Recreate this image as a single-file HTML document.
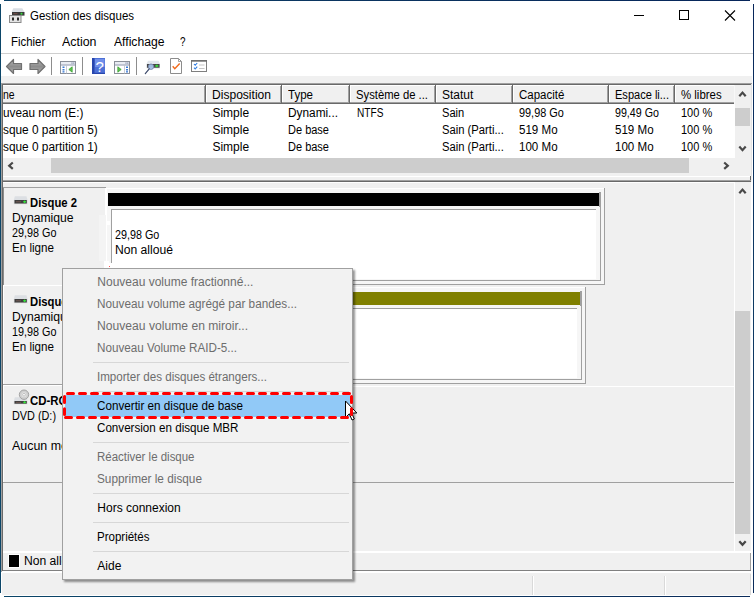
<!DOCTYPE html>
<html lang="fr"><head><meta charset="utf-8"><title>Gestion des disques</title>
<style>
html,body{margin:0;padding:0}
body{width:754px;height:597px;overflow:hidden;background:#fff;position:relative;font:12px/14px "Liberation Sans",sans-serif;color:#000}
.a,.t,svg{position:absolute}
.t{white-space:nowrap;transform-origin:0 50%;line-height:14px;font-size:12px}
.g{background:#f0f0f0}.w{background:#fff}.d{background:#696969}.m{background:#a0a0a0}.n{background:#0b2d5b}
.sep{background:#d7d7d7;height:1px;left:93px;width:256px}
</style></head><body>
<!-- gray client -->
<div class="a g" style="left:1px;top:76px;width:752px;height:520px"></div>
<!-- window frame -->
<div class="a w" style="left:752px;top:76px;width:1px;height:520px"></div>
<div class="a w" style="left:751px;top:182px;width:1px;height:414px"></div>
<div class="a w" style="left:1px;top:595px;width:752px;height:1px"></div>
<div class="a w" style="left:1px;top:573px;width:1px;height:23px"></div>
<div class="a" style="left:4px;top:0;width:746px;height:1px;background:linear-gradient(90deg,#0d4166,#07265a)"></div>
<div class="a" style="left:4px;top:596px;width:746px;height:1px;background:linear-gradient(90deg,#0a4568,#0b2b5a)"></div>
<div class="a" style="left:0;top:4px;width:1px;height:589px;background:#0c4669"></div>
<div class="a" style="left:753px;top:4px;width:1px;height:589px;background:linear-gradient(180deg,#07265a,#0d3a63 50%,#0b2b5a)"></div>
<!-- title icon -->
<svg style="left:9px;top:7px" width="17" height="17" viewBox="0 0 17 17">
<path d="M4.300 1.300h9l2.200 4h-13z" fill="#d9dee4"/>
<rect x="3" y="5" width="12.5" height="3.6" fill="#3a3a3a"/>
<rect x="4.5" y="6" width="4" height="1.2" fill="#6b4a45"/>
<rect x="11.6" y="5.8" width="1.8" height="1.8" fill="#35e03a"/>
<rect x=".5" y="8.5" width="11.5" height="7" fill="#e4e4e4" stroke="#8a8a8a" stroke-width="1"/>
<rect x="3" y="10.5" width="2" height="3" fill="#2a2a2a"/><rect x="8" y="10.5" width="2" height="3" fill="#2a2a2a"/>
</svg>
<!-- window controls -->
<svg style="left:630px;top:6px" width="110" height="20" viewBox="0 0 110 20" fill="none" stroke="#000" stroke-width="1">
<path d="M4 9.5h10"/><rect x="49.5" y="4.5" width="9" height="9"/><path d="M95 4.5l10 10M105 4.5l-10 10" stroke-width="1.1"/>
</svg>
<div class="a" style="left:1px;top:53px;width:752px;height:1px;background:#cfcfcf"></div>

<!-- toolbar -->
<svg style="left:0;top:54px" width="220" height="24" viewBox="0 0 220 24">
<defs><linearGradient id="ag" x1="0" y1="0" x2="0" y2="1"><stop offset="0" stop-color="#b4b4b4"/><stop offset=".5" stop-color="#8d8d8d"/><stop offset="1" stop-color="#b0b0b0"/></linearGradient></defs>
<!-- back / forward arrows -->
<path d="M6.500 12.500l7-7v4h8v6h-8v4z" fill="url(#ag)" stroke="#707070" stroke-width="1.200" stroke-linejoin="round"/>
<path d="M45 12.500l-7-7v4h-8v6h8v4z" fill="url(#ag)" stroke="#707070" stroke-width="1.200" stroke-linejoin="round"/>
<rect x="51" y="3" width="1" height="18" fill="#8d8d8d"/>
<!-- show/hide tree -->
<rect x="60.500" y="7.500" width="15" height="12" fill="#fff" stroke="#8a8f99"/>
<rect x="61" y="8" width="14" height="2.500" fill="#e9ecf3"/><rect x="71.500" y="8.500" width="1" height="1.200" fill="#6d7a99"/><rect x="73.300" y="8.500" width="1" height="1.200" fill="#6d7a99"/>
<rect x="61" y="10.500" width="14" height="1" fill="#8a93ab"/>
<rect x="62.500" y="12.500" width="2" height="1.500" fill="#3a7bd5"/><rect x="62.500" y="15" width="2" height="1.500" fill="#3a7bd5"/><rect x="62.500" y="17.200" width="2" height="1.300" fill="#3a7bd5"/>
<rect x="66" y="11.500" width=".8" height="8" fill="#b9bfcc"/>
<path d="M68.800 15.500l3.400-2.700v5.400z" fill="#5fc24f" stroke="#2f9a2a" stroke-width=".7"/>
<rect x="82" y="3" width="1" height="18" fill="#8d8d8d"/>
<!-- help -->
<rect x="92" y="4" width="13" height="16" fill="#4d70d6"/>
<rect x="92" y="4" width="2.500" height="16" fill="#2846ad"/><rect x="92" y="18.800" width="13" height="1.200" fill="#2846ad"/>
<rect x="95" y="5" width="9.500" height="8" fill="#7c9af0" opacity=".75"/>
<text x="95.500" y="17.500" font-family="Liberation Sans, sans-serif" font-size="15" fill="#fff">?</text>
<!-- action pane -->
<rect x="114.500" y="7.500" width="15" height="12" fill="#fff" stroke="#8a8f99"/>
<rect x="115" y="8" width="14" height="2.500" fill="#e9ecf3"/><rect x="125.500" y="8.500" width="1" height="1.200" fill="#6d7a99"/><rect x="127.300" y="8.500" width="1" height="1.200" fill="#6d7a99"/>
<rect x="115" y="10.500" width="14" height="1" fill="#8a93ab"/>
<rect x="124" y="11.500" width=".8" height="8" fill="#b9bfcc"/>
<rect x="126" y="12.500" width="2" height="1.500" fill="#3a7bd5"/><rect x="126" y="15" width="2" height="1.500" fill="#3a7bd5"/><rect x="126" y="17.200" width="2" height="1.300" fill="#3a7bd5"/>
<path d="M121.200 15.500l-3.400-2.700v5.400z" fill="#5fc24f" stroke="#2f9a2a" stroke-width=".7"/>
<rect x="136" y="3" width="1" height="18" fill="#8d8d8d"/>
<!-- rescan disk -->
<path d="M148 6.800h10.500l1.500 3.200h-13.500z" fill="#e1e6ec"/>
<rect x="146.500" y="10" width="13.500" height="4.300" fill="#cfd3d8"/><rect x="147" y="10" width="12.500" height="3.700" fill="#454545"/>
<rect x="155.300" y="11.200" width="3" height="1.400" fill="#38e03d"/><rect x="156.300" y="10.600" width="1" height="2.600" fill="#38e03d"/>
<circle cx="151" cy="12.700" r="2.700" fill="#a9c8ee" fill-opacity=".9" stroke="#7686ab" stroke-width=".9"/>
<path d="M149.200 14.900l-3.900 4.700" stroke="#3d4a6b" stroke-width="1.200" stroke-linecap="round"/>
<!-- doc w/ check -->
<path d="M170.500 4.500h8l3 3v12h-11z" fill="#fff" stroke="#8c8c8c"/>
<path d="M178.500 4.500v3h3" fill="none" stroke="#8c8c8c" stroke-width=".8"/>
<path d="M172.700 12.300l2.100 2.500 4.900-5.300" fill="none" stroke="#f26a1b" stroke-width="1.400"/>
<!-- checklist -->
<rect x="191.500" y="6.500" width="15" height="11" fill="#fff" stroke="#7f7f7f"/>
<rect x="191" y="6" width="16" height="1.700" fill="#707070"/>
<path d="M194 10l1.200 1.300 2-2.300M194 13.700l1.200 1.300 2-2.300" fill="none" stroke="#2d7be0" stroke-width="1.100"/>
<rect x="199" y="10.500" width="5.500" height="1" fill="#c5c5c5"/><rect x="199" y="14" width="5.500" height="1" fill="#c5c5c5"/>
</svg>

<!-- list view -->
<div class="a m" style="left:1px;top:83px;width:1px;height:489px;z-index:3"></div>
<div class="a d" style="left:2px;top:84px;width:1px;height:487px;z-index:3"></div>
<div class="a m" style="left:1px;top:83px;width:751px;height:1px"></div>
<div class="a d" style="left:2px;top:84px;width:749px;height:1px"></div>
<div class="a w" style="left:3px;top:176px;width:748px;height:1px"></div>
<div class="a w" style="left:752px;top:83px;width:1px;height:490px"></div>
<div class="a " style="left:751px;top:84px;width:1px;height:92px;background:#e3e3e3"></div>
<div class="a w" style="left:3px;top:104px;width:732px;height:54px"></div>
<div class="a w" style="left:3px;top:85px;width:731px;height:1px"></div>
<div class="a m" style="left:3px;top:102px;width:731px;height:1px"></div>
<div class="a d" style="left:3px;top:103px;width:731px;height:1px"></div>
<div class="a m" style="left:204px;top:86px;width:1px;height:17px"></div>
<div class="a d" style="left:205px;top:85px;width:1px;height:19px"></div>
<div class="a w" style="left:206px;top:85px;width:1px;height:17px"></div>
<div class="a m" style="left:280px;top:86px;width:1px;height:17px"></div>
<div class="a d" style="left:281px;top:85px;width:1px;height:19px"></div>
<div class="a w" style="left:282px;top:85px;width:1px;height:17px"></div>
<div class="a m" style="left:348px;top:86px;width:1px;height:17px"></div>
<div class="a d" style="left:349px;top:85px;width:1px;height:19px"></div>
<div class="a w" style="left:350px;top:85px;width:1px;height:17px"></div>
<div class="a m" style="left:434px;top:86px;width:1px;height:17px"></div>
<div class="a d" style="left:435px;top:85px;width:1px;height:19px"></div>
<div class="a w" style="left:436px;top:85px;width:1px;height:17px"></div>
<div class="a m" style="left:511px;top:86px;width:1px;height:17px"></div>
<div class="a d" style="left:512px;top:85px;width:1px;height:19px"></div>
<div class="a w" style="left:513px;top:85px;width:1px;height:17px"></div>
<div class="a m" style="left:607px;top:86px;width:1px;height:17px"></div>
<div class="a d" style="left:608px;top:85px;width:1px;height:19px"></div>
<div class="a w" style="left:609px;top:85px;width:1px;height:17px"></div>
<div class="a m" style="left:673px;top:86px;width:1px;height:17px"></div>
<div class="a d" style="left:674px;top:85px;width:1px;height:19px"></div>
<div class="a w" style="left:675px;top:85px;width:1px;height:17px"></div>
<div class="a " style="left:734px;top:85px;width:1px;height:19px;background:#f8f8f8"></div>
<div class="a " style="left:735px;top:108px;width:15px;height:18px;background:#cdcdcd"></div>
<div class="a " style="left:51px;top:158px;width:638px;height:15px;background:#cdcdcd"></div>
<svg style="left:0;top:85px" width="754" height="92" viewBox="0 0 754 92" fill="none" stroke="#484848" stroke-width="2.200">
<path d="M739.300 11.200l3.200-3.600 3.200 3.600"/><path d="M739.300 61.600l3.200 3.600 3.200-3.600"/>
<path d="M12.800 77.500l-3.600 3.200 3.600 3.200"/><path d="M724.200 77.500l3.600 3.200-3.600 3.200"/>
</svg>

<!-- lower pane -->
<div class="a d" style="left:750px;top:176px;width:1px;height:6px"></div>
<div class="a m" style="left:3px;top:180px;width:748px;height:1px"></div>
<div class="a d" style="left:3px;top:181px;width:747px;height:1px"></div>
<div class="a w" style="left:3px;top:182px;width:731px;height:1px"></div>
<div class="a w" style="left:734px;top:182px;width:1px;height:370px"></div>
<div class="a " style="left:735px;top:311px;width:15px;height:223px;background:#cdcdcd"></div>
<div class="a m" style="left:3px;top:187px;width:103px;height:1px"></div>
<div class="a " style="left:3px;top:188px;width:1px;height:97px;background:#8c8c8c"></div>
<div class="a w" style="left:3px;top:285px;width:103px;height:1px"></div>
<div class="a w" style="left:3px;top:286px;width:1px;height:98px"></div>
<div class="a m" style="left:3px;top:384px;width:103px;height:1px"></div>
<div class="a w" style="left:3px;top:385px;width:103px;height:1px"></div>
<div class="a w" style="left:106px;top:386px;width:628px;height:1px"></div>
<div class="a w" style="left:3px;top:386px;width:1px;height:97px"></div>
<div class="a m" style="left:3px;top:482px;width:731px;height:1px"></div>
<div class="a " style="left:105px;top:188px;width:499px;height:97px;background:#f6f6f6"></div>
<div class="a w" style="left:105px;top:188px;width:499px;height:1px"></div>
<div class="a w" style="left:105px;top:188px;width:2px;height:97px"></div>
<div class="a m" style="left:604px;top:188px;width:1px;height:97px"></div>
<div class="a m" style="left:106px;top:284px;width:499px;height:1px"></div>
<div class="a " style="left:108px;top:193px;width:491px;height:13px;background:#000"></div>
<div class="a m" style="left:599px;top:192px;width:1px;height:15px"></div>
<div class="a m" style="left:600px;top:192px;width:1px;height:89px"></div>
<div class="a m" style="left:108px;top:280px;width:493px;height:1px"></div>
<div class="a m" style="left:111px;top:209px;width:485px;height:70px"></div>
<div class="a w" style="left:112px;top:210px;width:484px;height:69px"></div>
<div class="a w" style="left:106px;top:221px;width:4px;height:4px"></div>
<div class="a w" style="left:104px;top:261px;width:5px;height:2px"></div>
<div class="a w" style="left:104px;top:263px;width:10px;height:5px"></div>
<div class="a " style="left:109px;top:266px;width:1px;height:1px;background:#f55"></div>
<div class="a " style="left:99px;top:215px;width:7px;height:46px;background:#f4f4f4"></div>
<div class="a " style="left:105px;top:287px;width:480px;height:97px;background:#f6f6f6"></div>
<div class="a w" style="left:105px;top:287px;width:480px;height:1px"></div>
<div class="a w" style="left:105px;top:287px;width:2px;height:97px"></div>
<div class="a m" style="left:585px;top:287px;width:1px;height:97px"></div>
<div class="a m" style="left:106px;top:383px;width:480px;height:1px"></div>
<div class="a " style="left:108px;top:292px;width:472px;height:13px;background:#808000"></div>
<div class="a m" style="left:580px;top:291px;width:1px;height:15px"></div>
<div class="a m" style="left:581px;top:291px;width:1px;height:89px"></div>
<div class="a m" style="left:108px;top:379px;width:474px;height:1px"></div>
<div class="a m" style="left:111px;top:308px;width:466px;height:70px"></div>
<div class="a w" style="left:112px;top:309px;width:465px;height:69px"></div>
<svg style="left:734px;top:182px" width="18" height="370" viewBox="0 0 18 370" fill="none" stroke="#484848" stroke-width="2.200">
<path d="M5.300 11.200l3.200-3.600 3.200 3.600"/><path d="M5.300 359.200l3.200 3.600 3.200-3.600"/>
</svg>
<svg style="left:13px;top:195px" width="16" height="11" viewBox="0 0 16 11"><path d="M1.800 1.200h11.700l1 3.800h-13.700z" fill="#dcdfe3"/><rect x=".8" y="5" width="13.700" height="4.200" fill="#d6d6d6"/><rect x="1.500" y="5" width="12.300" height="3.500" fill="#3f3f3f"/><rect x="3" y="6.200" width="5" height="1.100" fill="#6d5652"/><rect x="10.300" y="6" width="2.600" height="1.500" fill="#35e23a"/><rect x="11.100" y="5.500" width="1" height="2.500" fill="#35e23a"/></svg>
<svg style="left:13px;top:294px" width="16" height="11" viewBox="0 0 16 11"><path d="M1.800 1.200h11.700l1 3.800h-13.700z" fill="#dcdfe3"/><rect x=".8" y="5" width="13.700" height="4.200" fill="#d6d6d6"/><rect x="1.500" y="5" width="12.300" height="3.500" fill="#3f3f3f"/><rect x="3" y="6.200" width="5" height="1.100" fill="#6d5652"/><rect x="10.300" y="6" width="2.600" height="1.500" fill="#35e23a"/><rect x="11.100" y="5.500" width="1" height="2.500" fill="#35e23a"/></svg>
<svg style="left:13px;top:389px" width="17" height="16" viewBox="0 0 17 16"><path d="M1.800 8.200h11.700l1 3.800h-13.700z" fill="#dcdfe3"/><rect x=".8" y="12" width="13.700" height="3.200" fill="#d6d6d6"/><rect x="1.500" y="12" width="12.300" height="2.700" fill="#3f3f3f"/><rect x="3" y="12.900" width="5" height="1" fill="#6d5652"/><rect x="10.300" y="12.700" width="2.600" height="1.300" fill="#35e23a"/><rect x="11.100" y="12.200" width="1" height="2.300" fill="#35e23a"/><circle cx="11" cy="5.700" r="4.700" fill="#cfcfcf" stroke="#a3a3a3" stroke-width="1"/><circle cx="11" cy="5.700" r="2.500" fill="#e2e2e2"/><circle cx="11" cy="5.700" r="1.300" fill="#fff" stroke="#9a9a9a" stroke-width=".5"/></svg>

<!-- legend + status -->
<div class="a w" style="left:3px;top:551px;width:748px;height:2px"></div>
<div class="a w" style="left:8px;top:554px;width:12px;height:14px"></div>
<div class="a " style="left:9px;top:555px;width:10px;height:12px;background:#000"></div>
<div class="a m" style="left:750px;top:553px;width:1px;height:18px"></div>
<div class="a " style="left:3px;top:570px;width:748px;height:1px;background:#808080"></div>
<div class="a w" style="left:1px;top:571px;width:751px;height:2px"></div>
<div class="a " style="left:532px;top:576px;width:1px;height:19px;background:#d9d9d9"></div>
<div class="a w" style="left:533px;top:576px;width:1px;height:19px"></div>
<div class="a " style="left:664px;top:576px;width:1px;height:19px;background:#d9d9d9"></div>
<div class="a w" style="left:665px;top:576px;width:1px;height:19px"></div>
<div class="a " style="left:750px;top:574px;width:1px;height:21px;background:#d9d9d9"></div>

<div id="maintext">
<span class="t" style="left:30.0px;top:9px;transform:scaleX(0.9565);">Gestion des disques</span>
<span class="t" style="left:11.4px;top:35px;transform:scaleX(0.9496);">Fichier</span>
<span class="t" style="left:62.3px;top:35px;transform:scaleX(1.0342);">Action</span>
<span class="t" style="left:113.5px;top:35px;transform:scaleX(1.0135);">Affichage</span>
<span class="t" style="left:180.4px;top:35px;transform:scaleX(0.8224);">?</span>
<span class="t" style="left:2.6px;top:88px;transform:scaleX(0.8683);">ne</span>
<span class="t" style="left:212.2px;top:88px;transform:scaleX(1.0051);">Disposition</span>
<span class="t" style="left:288.0px;top:88px;transform:scaleX(0.9610);">Type</span>
<span class="t" style="left:356.4px;top:88px;transform:scaleX(0.9387);">Système de ...</span>
<span class="t" style="left:442.0px;top:88px;">Statut</span>
<span class="t" style="left:518.7px;top:88px;transform:scaleX(0.9562);">Capacité</span>
<span class="t" style="left:615.4px;top:88px;transform:scaleX(0.9199);">Espace li...</span>
<span class="t" style="left:681.3px;top:88px;transform:scaleX(0.9511);">% libres</span>
<span class="t" style="left:2.6px;top:106px;transform:scaleX(0.9799);">uveau nom (E:)</span>
<span class="t" style="left:212.4px;top:106px;">Simple</span>
<span class="t" style="left:288.2px;top:106px;transform:scaleX(0.9864);">Dynami...</span>
<span class="t" style="left:357.0px;top:106px;transform:scaleX(0.8423);">NTFS</span>
<span class="t" style="left:442.0px;top:106px;transform:scaleX(0.9280);">Sain</span>
<span class="t" style="left:518.7px;top:106px;transform:scaleX(0.9073);">99,98 Go</span>
<span class="t" style="left:615.4px;top:106px;transform:scaleX(0.8891);">99,49 Go</span>
<span class="t" style="left:681.0px;top:106px;transform:scaleX(0.9168);">100 %</span>
<span class="t" style="left:2.6px;top:123px;transform:scaleX(0.9869);">sque 0 partition 5)</span>
<span class="t" style="left:212.4px;top:123px;">Simple</span>
<span class="t" style="left:288.2px;top:123px;transform:scaleX(0.9172);">De base</span>
<span class="t" style="left:442.0px;top:123px;transform:scaleX(0.9359);">Sain (Parti...</span>
<span class="t" style="left:518.7px;top:123px;transform:scaleX(0.9642);">519 Mo</span>
<span class="t" style="left:615.4px;top:123px;transform:scaleX(0.9642);">519 Mo</span>
<span class="t" style="left:681.0px;top:123px;transform:scaleX(0.9168);">100 %</span>
<span class="t" style="left:2.6px;top:140px;transform:scaleX(0.9869);">sque 0 partition 1)</span>
<span class="t" style="left:212.4px;top:140px;">Simple</span>
<span class="t" style="left:288.2px;top:140px;transform:scaleX(0.9172);">De base</span>
<span class="t" style="left:442.0px;top:140px;transform:scaleX(0.9359);">Sain (Parti...</span>
<span class="t" style="left:518.7px;top:140px;transform:scaleX(0.9642);">100 Mo</span>
<span class="t" style="left:615.4px;top:140px;transform:scaleX(0.9642);">100 Mo</span>
<span class="t" style="left:681.0px;top:140px;transform:scaleX(0.9168);">100 %</span>
<span class="t" style="left:30.1px;top:196px;transform:scaleX(0.9397);font-weight:bold;">Disque 2</span>
<span class="t" style="left:12.2px;top:211px;transform:scaleX(1.0148);">Dynamique</span>
<span class="t" style="left:12.2px;top:226px;transform:scaleX(0.8992);">29,98 Go</span>
<span class="t" style="left:12.2px;top:241px;transform:scaleX(0.9683);">En ligne</span>
<span class="t" style="left:30.1px;top:295px;transform:scaleX(0.9397);font-weight:bold;">Disque 1</span>
<span class="t" style="left:12.2px;top:310px;transform:scaleX(1.0148);">Dynamique</span>
<span class="t" style="left:12.2px;top:325px;transform:scaleX(0.8992);">19,98 Go</span>
<span class="t" style="left:12.2px;top:340px;transform:scaleX(0.9683);">En ligne</span>
<span class="t" style="left:30.0px;top:394px;transform:scaleX(0.9521);font-weight:bold;">CD-ROM 0</span>
<span class="t" style="left:12.2px;top:409px;transform:scaleX(0.9040);">DVD (D:)</span>
<span class="t" style="left:12.2px;top:439px;transform:scaleX(1.0350);">Aucun média</span>
<span class="t" style="left:115.3px;top:228px;transform:scaleX(0.8972);">29,98 Go</span>
<span class="t" style="left:115.3px;top:243px;transform:scaleX(1.0109);">Non alloué</span>
<span class="t" style="left:23.8px;top:554px;transform:scaleX(1.0109);">Non alloué</span>
</div>
<!-- context menu -->
<div class="a" style="left:62px;top:268px;width:291px;height:312px;box-sizing:border-box;background:#f2f2f2;border:1px solid #a0a0a0;box-shadow:2px 2px 2px rgba(0,0,0,.42)"></div>
<div class="a" style="left:65px;top:395px;width:285px;height:22px;background:#91c9f7"></div>
<div class="a sep" style="top:362px"></div>
<div class="a sep" style="top:391px"></div>
<div class="a sep" style="top:442px"></div>
<div class="a sep" style="top:493px"></div>
<div class="a sep" style="top:522px"></div>
<div class="a sep" style="top:551px"></div>
<div id="menutext">
<span class="t" style="left:97.3px;top:275px;color:#6d6d6d;">Nouveau volume fractionné...</span>
<span class="t" style="left:97.3px;top:297px;transform:scaleX(0.9797);color:#6d6d6d;">Nouveau volume agrégé par bandes...</span>
<span class="t" style="left:97.3px;top:319px;transform:scaleX(1.0107);color:#6d6d6d;">Nouveau volume en miroir...</span>
<span class="t" style="left:97.3px;top:341px;transform:scaleX(0.9717);color:#6d6d6d;">Nouveau Volume RAID-5...</span>
<span class="t" style="left:97.3px;top:370px;transform:scaleX(0.9654);color:#6d6d6d;">Importer des disques étrangers...</span>
<span class="t" style="left:97.3px;top:399px;transform:scaleX(0.9727);">Convertir en disque de base</span>
<span class="t" style="left:97.3px;top:421px;transform:scaleX(0.9687);">Conversion en disque MBR</span>
<span class="t" style="left:97.3px;top:450px;transform:scaleX(0.9553);color:#6d6d6d;">Réactiver le disque</span>
<span class="t" style="left:97.3px;top:472px;transform:scaleX(0.9838);color:#6d6d6d;">Supprimer le disque</span>
<span class="t" style="left:97.3px;top:501px;">Hors connexion</span>
<span class="t" style="left:97.3px;top:530px;transform:scaleX(0.9597);">Propriétés</span>
<span class="t" style="left:97.3px;top:559px;">Aide</span>
</div>
<svg style="left:58px;top:386px" width="304" height="40" viewBox="0 0 304 40">
<path d="M287.500 15v16.500l3.800-3.700 2.700 6.200 2.300-1-2.700-6h5.200z" fill="#fff" stroke="#000" stroke-width="1" stroke-linejoin="miter"/>
<g fill="none" stroke="#f00" stroke-width="3" stroke-linecap="round">
<path d="M9.500 7.500H293.500" stroke-dasharray="6 6"/>
<path d="M7.500 31.500H293" stroke-dasharray="6 6"/>
<path d="M6.500 10.400V16.600M6.500 22.800V28.400M293.500 10.400V16.600M293.500 22.800V28.400"/>
</g>
</svg>

</body></html>
